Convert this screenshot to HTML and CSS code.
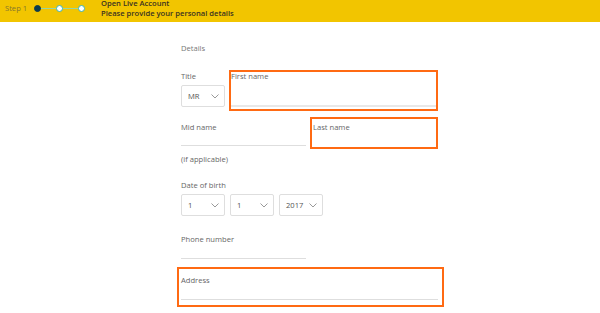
FILE: index.html
```html
<!DOCTYPE html>
<html lang="en">
<head>
    <meta charset="UTF-8">
    <meta name="viewport" content="width=device-width, initial-scale=1.0">
    <title>Open Live Account</title>
    <link rel="stylesheet" href="styles.css">
</head>
<body>

<div class="topbar">
    <div class="steps">
        <span class="step-label">Step 1</span>
        <div class="stepper">
            <span class="dot done"></span>
            <span class="dot"></span>
            <span class="dot"></span>
        </div>
    </div>
    <div class="topbar-text">
        <div class="topbar-title">Open Live Account</div>
        <div class="topbar-sub">Please provide your personal details</div>
    </div>
</div>

<div class="form">
    <div class="section">Details</div>

    <div class="row-title">
        <div class="title-col">
            <div class="label">Title</div>
            <div class="select">MR <svg width="8" height="5" viewBox="0 0 8 5"><path d="M0.5 0.5 L4 4 L7.5 0.5" fill="none" stroke="#999" stroke-width="1"/></svg></div>
        </div>
        <div class="box box-first">
            <div class="label">First name</div>
            <div class="input input-thick"></div>
        </div>
    </div>

    <div class="row-names">
        <div class="field field-mid">
            <div class="label">Mid name</div>
            <div class="input"></div>
        </div>
        <div class="box box-last">
            <div class="label">Last name</div>
        </div>
    </div>
    <div class="label hint">(if applicable)</div>

    <div class="label dob-label">Date of birth</div>
    <div class="dob">
        <div class="select">1 <svg width="8" height="5" viewBox="0 0 8 5"><path d="M0.5 0.5 L4 4 L7.5 0.5" fill="none" stroke="#999" stroke-width="1"/></svg></div>
        <div class="select">1 <svg width="8" height="5" viewBox="0 0 8 5"><path d="M0.5 0.5 L4 4 L7.5 0.5" fill="none" stroke="#999" stroke-width="1"/></svg></div>
        <div class="select">2017 <svg width="8" height="5" viewBox="0 0 8 5"><path d="M0.5 0.5 L4 4 L7.5 0.5" fill="none" stroke="#999" stroke-width="1"/></svg></div>
    </div>

    <div class="field field-phone">
        <div class="label">Phone number</div>
        <div class="input input-tall"></div>
    </div>

    <div class="box box-address">
        <div class="label">Address</div>
        <div class="input input-tall"></div>
    </div>
</div>

</body>
</html>
```

FILE: styles.css
```css
body {
    font-family: "Open Sans", Arial, sans-serif;
    margin: 0;
    background-color: white;
    color: #666;
    font-size: 7.6px;
}
.topbar {
    display: flex;
    height: 22px;
    background-color: #f2c500;
}
.steps {
    display: flex;
    align-items: center;
    height: 16px;
    padding-left: 5px;
}
.step-label {
    color: #85762e;
    width: 29px;
    line-height: 10px;
}
.stepper {
    position: relative;
    display: flex;
    justify-content: space-between;
    width: 51px;
}
.stepper::before {
    content: "";
    position: absolute;
    left: 3px;
    right: 3px;
    top: 3px;
    height: 1.5px;
    background-color: #98d6a0;
}
.dot {
    position: relative;
    width: 5px;
    height: 5px;
    border-radius: 50%;
    border: 1px solid #3bb3b8;
    background-color: white;
}
.dot.done {
    background-color: #0c3b4d;
    border-color: #0c3b4d;
}
.topbar-text {
    margin-left: 16px;
    margin-top: -2px;
    color: #3a3320;
    font-weight: 600;
    line-height: 10px;
}
.form {
    width: 257px;
    margin-left: 181px;
    padding-top: 21px;
}
.label {
    line-height: 10px;
    color: #666;
}
.section {
    line-height: 10px;
    color: #777;
    margin-bottom: 17px;
}
.row-title {
    display: flex;
    gap: 4px;
}
.title-col {
    width: 44px;
    padding-top: 1px;
}
.title-col .label {
    margin-bottom: 4px;
}
.select {
    box-sizing: border-box;
    display: flex;
    align-items: center;
    justify-content: space-between;
    width: 44px;
    height: 22px;
    padding: 0 5px 0 6px;
    border: 1px solid #dedede;
    border-radius: 2px;
    color: #555;
}
.box {
    box-sizing: border-box;
    border: 2px solid #ff6a13;
}
.box-first {
    width: 209px;
    height: 41px;
    padding-bottom: 2px;
    display: flex;
    flex-direction: column;
}
.box-first .label {
    line-height: 8px;
}
.input {
    height: 13px;
    border-bottom: 1px solid #dedede;
}
.input-thick {
    flex: 1;
    border-bottom: 2px solid #e8e8e8;
}
.input-tall {
    height: 14px;
}
.row-names {
    display: grid;
    grid-template-columns: 125px 128px;
    gap: 4px;
    margin-top: 6px;
    align-items: start;
}
.field-mid {
    padding-top: 5px;
}
.box-last {
    height: 32px;
    padding: 3px 0 0 1px;
}
.hint {
    margin-top: 5px;
}
.dob-label {
    margin-top: 16px;
    margin-bottom: 4px;
}
.dob {
    display: flex;
    gap: 5px;
}
.field-phone {
    width: 125px;
    margin-top: 18px;
}
.box-address {
    width: 267px;
    height: 40px;
    margin: 8px 0 0 -4px;
    padding: 6px 4px 0 2px;
}
```
